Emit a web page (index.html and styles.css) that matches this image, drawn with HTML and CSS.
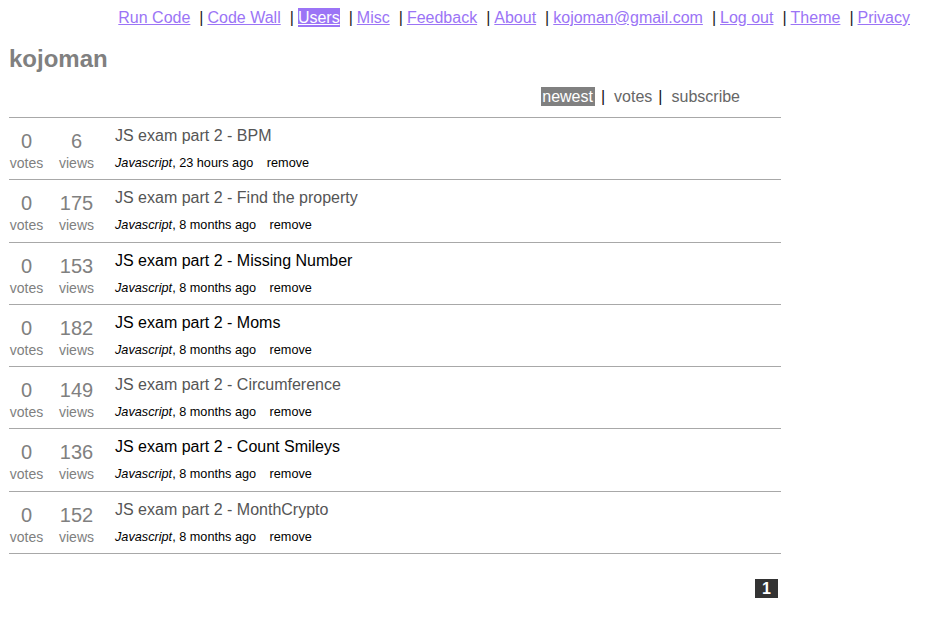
FILE: index.html
```html
<!DOCTYPE html>
<html lang="en">
<head>
  <meta charset="UTF-8" />
  <title>kojoman</title>
  <link rel="stylesheet" href="styles.css">
</head>
<body>

<div class="topnav">
  <a href="#">Run Code</a>
  <span class="sep">|</span><a href="#">Code Wall</a>
  <span class="sep">|</span><a href="#" class="active">Users</a>
  <span class="sep">|</span><a href="#">Misc</a>
  <span class="sep">|</span><a href="#">Feedback</a>
  <span class="sep">|</span><a href="#">About</a>
  <span class="sep">|</span><a href="#">kojoman@gmail.com</a>
  <span class="sep">|</span><a href="#">Log out</a>
  <span class="sep">|</span><a href="#">Theme</a>
  <span class="sep">|</span><a href="#">Privacy</a>
</div>

<div class="main">
  <h2 class="user-name">kojoman</h2>

  <div class="sort-tabs">
    <span class="tab current">newest</span><span class="bar">|</span><span class="tab">votes</span><span class="bar">|</span><span class="tab">subscribe</span>
  </div>

  <div class="question-list">
    <div class="question">
      <div class="stat votes"><div class="num">0</div><div class="label">votes</div></div>
      <div class="stat views"><div class="num">6</div><div class="label">views</div></div>
      <div class="summary">
        <div class="title">JS exam part 2 - BPM</div>
        <div class="meta"><i>Javascript</i>, 23 hours ago <span class="remove">remove</span></div>
      </div>
    </div>
    <div class="question">
      <div class="stat votes"><div class="num">0</div><div class="label">votes</div></div>
      <div class="stat views"><div class="num">175</div><div class="label">views</div></div>
      <div class="summary">
        <div class="title">JS exam part 2 - Find the property</div>
        <div class="meta"><i>Javascript</i>, 8 months ago <span class="remove">remove</span></div>
      </div>
    </div>
    <div class="question">
      <div class="stat votes"><div class="num">0</div><div class="label">votes</div></div>
      <div class="stat views"><div class="num">153</div><div class="label">views</div></div>
      <div class="summary">
        <div class="title unseen">JS exam part 2 - Missing Number</div>
        <div class="meta"><i>Javascript</i>, 8 months ago <span class="remove">remove</span></div>
      </div>
    </div>
    <div class="question">
      <div class="stat votes"><div class="num">0</div><div class="label">votes</div></div>
      <div class="stat views"><div class="num">182</div><div class="label">views</div></div>
      <div class="summary">
        <div class="title unseen">JS exam part 2 - Moms</div>
        <div class="meta"><i>Javascript</i>, 8 months ago <span class="remove">remove</span></div>
      </div>
    </div>
    <div class="question">
      <div class="stat votes"><div class="num">0</div><div class="label">votes</div></div>
      <div class="stat views"><div class="num">149</div><div class="label">views</div></div>
      <div class="summary">
        <div class="title">JS exam part 2 - Circumference</div>
        <div class="meta"><i>Javascript</i>, 8 months ago <span class="remove">remove</span></div>
      </div>
    </div>
    <div class="question">
      <div class="stat votes"><div class="num">0</div><div class="label">votes</div></div>
      <div class="stat views"><div class="num">136</div><div class="label">views</div></div>
      <div class="summary">
        <div class="title unseen">JS exam part 2 - Count Smileys</div>
        <div class="meta"><i>Javascript</i>, 8 months ago <span class="remove">remove</span></div>
      </div>
    </div>
    <div class="question">
      <div class="stat votes"><div class="num">0</div><div class="label">votes</div></div>
      <div class="stat views"><div class="num">152</div><div class="label">views</div></div>
      <div class="summary">
        <div class="title">JS exam part 2 - MonthCrypto</div>
        <div class="meta"><i>Javascript</i>, 8 months ago <span class="remove">remove</span></div>
      </div>
    </div>
  </div>

  <div class="pager"><span class="page current">1</span></div>
</div>

</body>
</html>
```

FILE: styles.css
```css
* {
  box-sizing: border-box;
}

body {
  margin: 0;
  font-family: "Liberation Sans", Arial, sans-serif;
  background-color: #fff;
  color: #000;
}

.topnav {
  display: flex;
  justify-content: flex-end;
  align-items: center;
  padding: 7px 42px 0 0;
  height: 28px;
  font-size: 16px;
  line-height: 19px;
}

.topnav a {
  color: #9b74f6;
  text-decoration: underline;
}

.topnav a.active {
  background-color: #9b74f6;
  color: #fff;
}

.topnav .sep {
  color: #222;
  margin: 0 4px 0 9px;
}

.main {
  width: 781px;
  padding-left: 9px;
}

.user-name {
  margin: 17px 0 0;
  font-size: 24px;
  line-height: 28px;
  color: #808080;
}

.sort-tabs {
  display: flex;
  justify-content: flex-end;
  align-items: flex-start;
  padding-right: 41px;
  margin-top: 14px;
  height: 30px;
  font-size: 16px;
  line-height: 19px;
  color: #666;
}

.sort-tabs .tab.current {
  background-color: #808080;
  color: #fff;
  padding: 0 2px 0 1px;
}

.sort-tabs .bar {
  color: #111;
  margin: 0 9px 0 6px;
}

.question-list {
  border-bottom: 1px solid #a8a8a8;
}

.question {
  display: flex;
  height: 62.3px;
  border-top: 1px solid #a8a8a8;
}

.stat {
  text-align: center;
  color: #808080;
  padding-top: 11px;
}

.stat.votes {
  width: 35px;
}

.stat.views {
  width: 37px;
  margin-left: 14px;
}

.stat .num {
  font-size: 20px;
  line-height: 24px;
}

.stat .label {
  font-size: 14px;
  line-height: 20px;
}

.summary {
  margin-left: 20px;
  padding-top: 8px;
}

.summary .title {
  font-size: 16px;
  line-height: 20px;
  color: #555;
}

.summary .title.unseen {
  color: #000;
}

.summary .meta {
  margin-top: 7px;
  font-size: 12.7px;
  line-height: 20px;
}

.summary .remove {
  margin-left: 10px;
}

.pager {
  display: flex;
  justify-content: flex-end;
  padding-right: 3px;
  margin-top: 25px;
}

.page.current {
  display: inline-block;
  width: 23px;
  height: 19px;
  background-color: #333;
  color: #fff;
  font-weight: bold;
  font-size: 16px;
  line-height: 19px;
  text-align: center;
}
```
